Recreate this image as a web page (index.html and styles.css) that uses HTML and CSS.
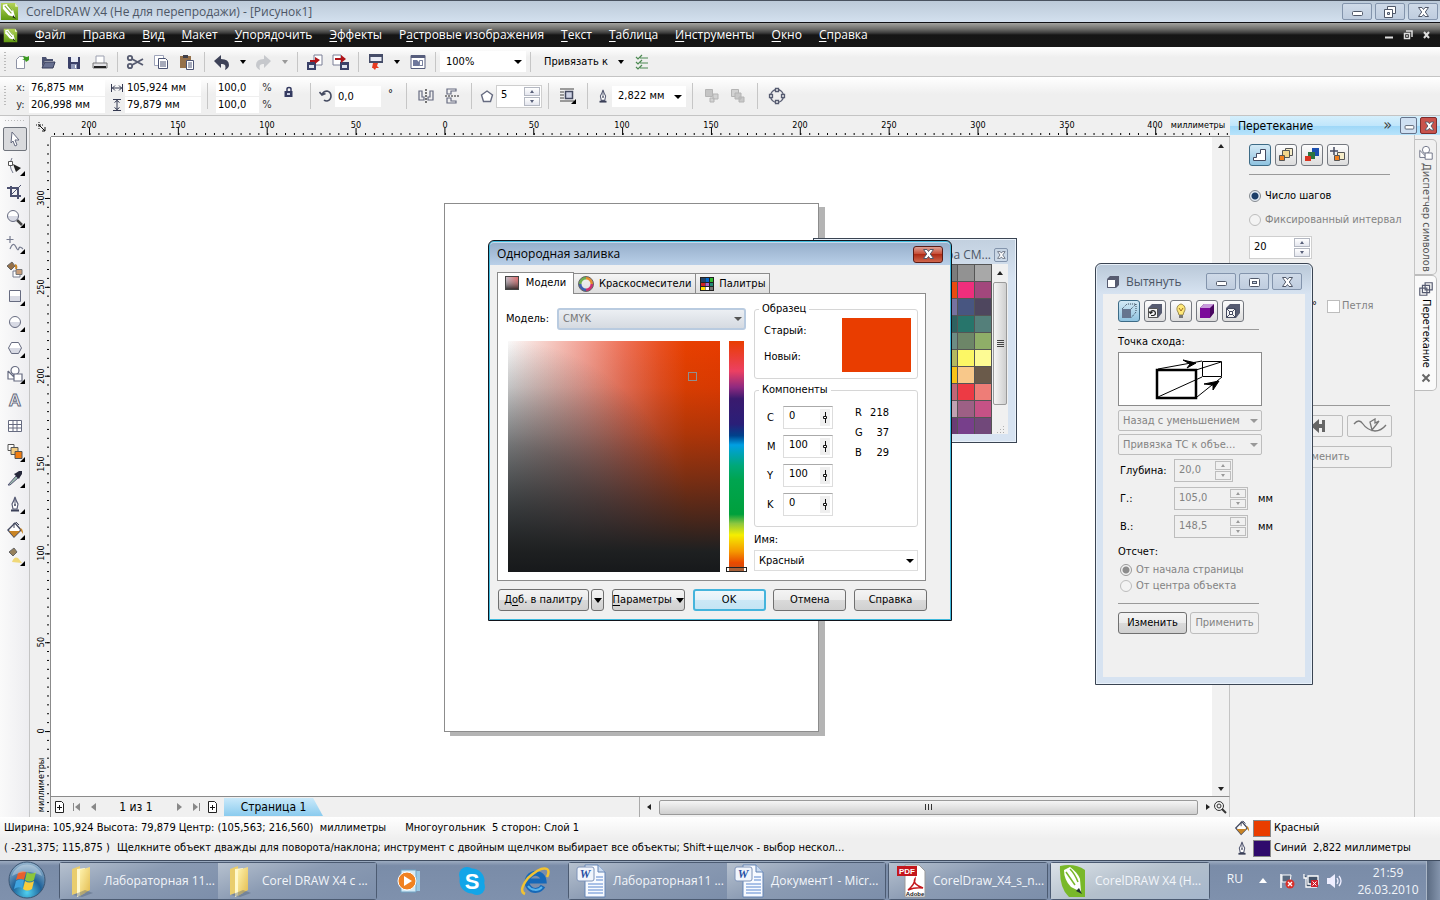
FILE: index.html
```html
<!DOCTYPE html>
<html lang="ru">
<head>
<meta charset="utf-8">
<title>CorelDRAW X4 - [Рисунок1]</title>
<link rel="stylesheet" href="styles.css">
</head>
<body>
<svg class="defs" width="0" height="0" aria-hidden="true">
  <defs>
    <linearGradient id="g-leaf" x1="0" y1="0" x2="0" y2="1"><stop offset="0" stop-color="#b4d458"/><stop offset="1" stop-color="#5f9a10"/></linearGradient>
    <linearGradient id="g-folder" x1="0" y1="0" x2="1" y2="1"><stop offset="0" stop-color="#fff3ae"/><stop offset="1" stop-color="#e2bb4e"/></linearGradient>
    <linearGradient id="g-shape" x1="0" y1="0" x2="0" y2="1"><stop offset=".5" stop-color="#fff"/><stop offset=".5" stop-color="#d8dae4"/></linearGradient>
    <radialGradient id="g-orb" cx=".5" cy=".85" r=".8"><stop offset="0" stop-color="#4fd0f0"/><stop offset=".5" stop-color="#1f6299"/><stop offset="1" stop-color="#8fb0cb"/></radialGradient>
    <symbol id="i-corel" viewBox="0 0 20 20"><path d="M1 1h15l3 4v14H1z" fill="url(#g-leaf)"/><path d="M16 1v4h3z" fill="#eef5d8"/><path d="M3 3l4-1 7 7 2 7-7-2-6-7z" fill="#fff"/><path d="M5 4l7 8M8 3l5 6" stroke="#7fae34" stroke-width="1.200"/><path d="M14 14l3 4-4-2z" fill="#1c2a14"/></symbol>
    <symbol id="i-bucket" viewBox="0 0 18 18"><path d="M2 9l7-7 6 7-7 7z" fill="#fff" stroke="#444a60" stroke-width="1.400"/><path d="M3 10h11l-6 6z" fill="#c98424"/><path d="M8 2v5M10 1l3 3" stroke="#444a60" fill="none"/><path d="M14 7q3 0 3 6l-2-3z" fill="#c98424"/></symbol>
    <symbol id="i-nib" viewBox="0 0 16 18"><path d="M8 2q-1 4-3 7l1 5h4l1-5q-2-3-3-7z" fill="#fff" stroke="#565b74" stroke-width="1.200"/><path d="M8 4v5" stroke="#565b74"/><path d="M4 15.500h8" stroke="#3b4058" stroke-width="2"/><circle cx="8" cy="10" r="1" fill="#3b4058"/></symbol>
    <symbol id="i-more" viewBox="0 0 5 5"><path d="M5 0v5H0z"/></symbol>
    <symbol id="i-shapes" viewBox="0 0 18 18"><circle cx="9" cy="5.500" r="4"/><path d="M2 6v8h6M2 6l6 6M8 9h8v7H8z"/></symbol>
    <symbol id="i-stack" viewBox="0 0 18 18"><path d="M8 2h8v8h-8zM5 5h8v8H5zM2 8h8v8H2z" fill="#f4f4f4" stroke="#555a70" stroke-width="1.300"/></symbol>
    <symbol id="i-folder" viewBox="0 0 30 34"><path d="M5 5l8-3v26l-8 3z" fill="#e9cd6d"/><path d="M10 5l8-1v25l-8 4z" fill="#fff8cc"/><path d="M13 6l10-3v23l-10 6z" fill="url(#g-folder)"/><path d="M6 31l12-5 8 3-11 4z" fill="#45556e" opacity=".35"/></symbol>
    <symbol id="i-word" viewBox="0 0 30 34"><path d="M9 1h13l7 7v25H9z" fill="#f7faff" stroke="#6283b4"/><path d="M22 1v7h7" fill="#c9daf0" stroke="#6283b4"/><path d="M20 13h7M20 16h7M12 20h15M12 23h15M12 26h15M12 29h15" stroke="#5b87cf"/><rect x="1" y="3" width="17" height="14" rx="2" fill="#f1f5fc" stroke="#7d92b8"/><text x="9" y="14" font-family="Liberation Serif,serif" font-size="12" font-weight="bold" font-style="italic" text-anchor="middle" fill="#2851a4">W</text></symbol>
    <symbol id="c-min" viewBox="0 0 16 12"><rect x="3.500" y="5.500" width="10" height="4" rx="1" fill="#fff" stroke="#505869"/></symbol>
    <symbol id="c-max" viewBox="0 0 16 12"><rect x="3.500" y="2.500" width="10" height="8" rx="1" fill="#fff" stroke="#505869"/><rect x="6.500" y="5.500" width="4" height="2" fill="#c5d4e5" stroke="#505869"/></symbol>
    <symbol id="c-x" viewBox="0 0 16 12"><path d="M3.500 1.500H7l1.500 2 1.500-2h3.500L10.300 6l3.200 4.500H10l-1.500-2-1.500 2H3.500L6.700 6z" fill="#fff" stroke="#505869"/></symbol>
    <symbol id="c-rest" viewBox="0 0 16 12"><path d="M5.500 .5h8v7h-8z" fill="#fff" stroke="#505869"/><path d="M2.500 3.500h8v8h-8z" fill="#fff" stroke="#505869"/><path d="M5.500 6.500h2v2h-2z" fill="#c5d4e5" stroke="#505869"/></symbol>
    <symbol id="i-slide" viewBox="0 0 5 11"><path d="M2.500 0v4M2.500 7v4M.5 4.500h3v2h-3z" fill="#fff" stroke="#111"/></symbol>
  </defs>
</svg>

<header class="titlebar">
  <svg class="app-icon" width="19" height="19"><use href="#i-corel"/></svg>
  <h1>CorelDRAW X4 (Не для перепродажи) - [Рисунок1]</h1>
  <div class="win-controls">
    <button aria-label="Свернуть"><svg width="16" height="12"><use href="#c-min"/></svg></button>
    <button aria-label="Восстановить"><svg width="16" height="12"><use href="#c-rest"/></svg></button>
    <button aria-label="Закрыть"><svg width="16" height="12"><use href="#c-x"/></svg></button>
  </div>
</header>

<nav class="menubar">
  <svg class="doc-icon" width="15" height="15"><use href="#i-corel"/></svg>
  <button><u>Ф</u>айл</button><button><u>П</u>равка</button><button><u>В</u>ид</button><button><u>М</u>акет</button><button><u>У</u>порядочить</button><button><u>Э</u>ффекты</button><button>Р<u>а</u>стровые изображения</button><button><u>Т</u>екст</button><button><u>Т</u>аблица</button><button><u>И</u>нструменты</button><button><u>О</u>кно</button><button><u>С</u>правка</button>
  <div class="doc-controls">
    <button aria-label="Свернуть документ"><svg width="10" height="10"><path d="M1 7.500h8" stroke="#ddd" stroke-width="2"/></svg></button>
    <button aria-label="Восстановить документ"><svg width="10" height="10"><path d="M3 1h6v6M1.500 3.500h5v5h-5zM4 5v2" fill="none" stroke="#ddd" stroke-width="1.500"/></svg></button>
    <button aria-label="Закрыть документ"><svg width="10" height="10"><path d="M2 2l5 6M7 2L2 8" stroke="#ddd" stroke-width="2"/></svg></button>
  </div>
</nav>

<div class="toolbar">
  <span class="grip"></span>
  <button aria-label="Создать"><svg width="16" height="16"><path d="M2.500 5.500l3-3h5v12h-8z" fill="#fff" stroke="#8e93a5"/><path d="M8 6l2-1-1-3 4 1 2-1 0 4-3 2-1-2z" fill="#3c9a20"/></svg></button>
  <button aria-label="Открыть"><svg width="16" height="16"><path d="M2 13V3h4l1 2h6v2H5z" fill="#4a5170"/><path d="M5 8h10l-2 6H2z" fill="#687090" stroke="#343a58"/></svg></button>
  <button aria-label="Сохранить"><svg width="16" height="16"><path d="M2 3h12v12H3l-1-1z" fill="#3a4068"/><path d="M5 3h7v5H5z" fill="#e9ecf5"/><path d="M5 10h6v5H5z" fill="#8f98b8"/><path d="M9 11h1v3H9z" fill="#fff"/></svg></button>
  <button aria-label="Печать"><svg width="16" height="16"><path d="M4 2h8v8H4z" fill="#fff" stroke="#9ca0b0"/><path d="M1 9h14v5H1z" fill="#e3e3e6" stroke="#777"/><path d="M2 12h12v2H2z" fill="#222"/></svg></button>
  <span class="sep"></span>
  <button aria-label="Вырезать"><svg width="18" height="16" fill="none" stroke="#565b70" stroke-width="1.800"><path d="M6 5l11 6M6 11l11-6"/><circle cx="4" cy="4" r="2.200"/><circle cx="4" cy="12" r="2.200"/></svg></button>
  <button aria-label="Копировать"><svg width="16" height="16" fill="#fff" stroke="#9ea4ba"><path d="M1.500 1.500h9v10h-9z"/><path d="M5.500 4.500h7l2 2v8h-9z" stroke="#4c5474"/><path d="M7 8h6M7 10h6M7 12h6" stroke="#4c5474"/></svg></button>
  <button aria-label="Вставить"><svg width="16" height="16"><path d="M1 2h11v12H1z" fill="#94704a"/><path d="M4 1h5v3H4z" fill="#40404a"/><path d="M7.500 6.500h7v9h-7z" fill="#fff" stroke="#4c5474"/><path d="M9 9h4M9 11h4M9 13h4" stroke="#4c5474"/></svg></button>
  <span class="sep"></span>
  <button aria-label="Отменить"><svg width="18" height="16"><path d="M1 7l7-6v4q8 0 8 6 0 3-4 5 2-7-4-6v4z" fill="#3e4258"/></svg></button>
  <button class="drop" aria-label="Список отмены"><i class="arr"></i></button>
  <button aria-label="Повторить"><svg width="18" height="16"><path d="M16 7L9 1v4q-8 0-8 6 0 3 4 5-2-7 4-6v4z" fill="#c6c8cc"/></svg></button>
  <button class="drop dim" aria-label="Список повтора"><i class="arr"></i></button>
  <span class="sep"></span>
  <button aria-label="Импорт"><svg width="18" height="18"><path d="M8 2h8v10H8z" fill="#fff" stroke="#7a7f96"/><path d="M1 9h9v8H1z" fill="#3a4068"/><path d="M3 12h5v3H3z" fill="#dfe3ee"/><path d="M4 7h5V4l5 3-5 4V9H4z" fill="#b01318"/></svg></button>
  <button aria-label="Экспорт"><svg width="18" height="18"><path d="M1 2h8v10H1z" fill="#fff" stroke="#7a7f96"/><path d="M8 9h9v8H8z" fill="#3a4068"/><path d="M10 12h5v3h-5z" fill="#dfe3ee"/><path d="M3 5h6V2l5 4-5 4V7H3z" fill="#b01318"/></svg></button>
  <span class="sep"></span>
  <button aria-label="Запуск приложений"><svg width="16" height="18"><path d="M1 1h14v9H1z" fill="#454c68"/><path d="M2.500 4h11v4h-11z" fill="#e9ecf5"/><path d="M5 10h5l-1 3 2 2-3 0-1 2-2-2-1 0z" fill="#e63a20"/></svg></button>
  <button class="drop" aria-label="Список приложений"><i class="arr"></i></button>
  <button aria-label="Экран приветствия"><svg width="16" height="16"><path d="M1 1.500h14v13H1z" fill="#fff" stroke="#565d7c"/><path d="M1 1h14v3H1z" fill="#565d7c"/><path d="M3 6h4l2 2 4-2v6H3z" fill="#6f789c"/><path d="M9.500 6.500h3v5h-3z" fill="#fff" stroke="#7a82a0"/></svg></button>
  <span class="sep"></span>
  <span class="pick zoom"><select aria-label="Масштаб"><option>100%</option></select></span>
  <span class="sep"></span>
  <button class="txt snap">Привязать к</button>
  <button class="drop" aria-label="Параметры привязки"><i class="arr"></i></button>
  <button aria-label="Параметры"><svg width="16" height="16" fill="none" stroke="#4d8a52" stroke-width="1.200"><path d="M6 4h8M6 9h8M6 14h8M2 3l2 2 4-4M2 8l2 2 4-4M2 13l2 2 4-4"/></svg></button>
</div>

<div class="toolbar props">
  <span class="grip"></span>
  <div class="pair">
    <label for="px">x:</label><input id="px" value="76,875 мм">
    <label for="py">y:</label><input id="py" value="206,998 мм">
  </div>
  <div class="pair">
    <label for="pw"><svg width="14" height="12" fill="none" stroke="#333850"><path d="M1.500 2v8M12.500 2v8M2 6h10M5 3.500L2.500 6 5 8.500M9 3.500L11.500 6 9 8.500"/></svg></label><input id="pw" aria-label="Ширина" value="105,924 мм">
    <label for="ph"><svg width="14" height="12" fill="none" stroke="#333850"><path d="M3 .5h8M3 11.500h8M7 1v10M4.500 3.500L7 1.500l2.500 2M4.500 8.500L7 10.500l2.500-2"/></svg></label><input id="ph" aria-label="Высота" value="79,879 мм">
  </div>
  <span class="sep"></span>
  <div class="pair scale">
    <input id="sx" value="100,0"><label for="sx">%</label>
    <input id="sy" value="100,0"><label for="sy">%</label>
  </div>
  <button class="lock" aria-label="Пропорции"><svg width="12" height="14"><path d="M1.500 6h8v6h-8z" fill="#343a60"/><path d="M4 6V4q0-1.500 2-1.500T8 4v2" fill="none" stroke="#343a60" stroke-width="1.500"/><path d="M4 8h3v2H4z" fill="#c9cfe4"/></svg></button>
  <span class="sep"></span>
  <label for="rot" class="ico"><svg width="14" height="14" fill="none" stroke="#444a60" stroke-width="1.600"><path d="M3 5q2-3 5-3 4 1 4 5 0 4-4 5-2 0-3-1M.5 3l2.500 3 3.500-1.500"/></svg></label>
  <input id="rot" class="w46" aria-label="Угол поворота" value="0,0"><span class="deg">°</span>
  <span class="sep"></span>
  <button aria-label="Отразить по горизонтали"><svg width="18" height="16" fill="none" stroke="#666b80" stroke-width="1.200"><path d="M2 3v9h5V9H5V3zM16 3v9h-5V9h2V3z"/><path d="M9 1v14" stroke-dasharray="2 1" stroke="#222"/></svg></button>
  <button aria-label="Отразить по вертикали"><svg width="18" height="16" fill="none" stroke="#666b80" stroke-width="1.200"><path d="M4 1h9v2H8v3H4zM4 15h9v-2H8v-3H4z"/><path d="M2 8h14" stroke-dasharray="2 1" stroke="#222"/></svg></button>
  <span class="sep"></span>
  <label for="sides" class="ico"><svg width="14" height="14"><path d="M7 2l5.500 4-2 6.500h-7l-2-6.500z" fill="#fff" stroke="#666b80" stroke-width="1.400"/></svg></label>
  <span class="spin w46"><input id="sides" aria-label="Число сторон" value="5"><span class="ud"><button aria-label="Больше"></button><button aria-label="Меньше"></button></span></span>
  <span class="sep"></span>
  <button aria-label="Обтекание"><svg width="18" height="18"><path d="M1 2h14M1 5h4M1 8h4M1 11h4M1 14h14" stroke="#444"/><rect x="6.500" y="4.500" width="7" height="7" fill="#cfd3e4" stroke="#444a60" stroke-width="1.500"/><path d="M17 12v5h-5z"/></svg></button>
  <span class="sep"></span>
  <label for="ow" class="ico"><svg width="14" height="16"><use href="#i-nib"/></svg></label>
  <span class="pick outline"><select id="ow" aria-label="Толщина абриса"><option>2,822 мм</option></select></span>
  <span class="sep"></span>
  <button aria-label="На передний план"><svg width="16" height="16" fill="#c4c4c4" stroke="#b4b4b4"><path d="M1.500 1.500h7v7h-7z"/><path d="M9 6h5v5H9zM6 10h4v4H6z" fill="#d2d2d2"/></svg></button>
  <button aria-label="На задний план"><svg width="16" height="16" fill="#d2d2d2" stroke="#b4b4b4"><path d="M1.500 1.500h7v7h-7z"/><path d="M5 5h6v6H5zM9 9h5v5H9z" fill="#c8c8c8"/></svg></button>
  <span class="sep"></span>
  <button aria-label="Преобразовать в кривые"><svg width="18" height="18" fill="#fff" stroke="#565b70" stroke-width="1.300"><circle cx="9" cy="9" r="6.500" fill="none"/><path d="M7.500 1.500h3v3h-3zM7.500 13.500h3v3h-3zM1.500 7.500h3v3h-3zM13.500 7.500h3v3h-3z"/></svg></button>
</div>

<main class="middle">
  <aside class="toolbox">
    <span class="grip flat"></span>
    <button class="on" aria-label="Указатель"><svg width="18" height="18"><path d="M6 2l7 8H9l2 5-2 1-2-5-2 2z" fill="#fff" stroke="#666b80"/></svg></button>
    <button aria-label="Форма"><svg width="18" height="18"><path d="M6 1q-4 7 1 15" fill="none" stroke="#777c90"/><path d="M2.500 4.500h4v4h-4z" fill="#fff" stroke="#555"/><path d="M7 7l8 4-5 4z" fill="#222"/></svg><svg class="more"><use href="#i-more"/></svg></button>
    <button aria-label="Обрезка"><svg width="18" height="18" fill="none" stroke="#4c5170" stroke-width="2"><path d="M5 3v10h10M1 5h11v11"/><path d="M15 2L5 12" stroke-width="1"/></svg><svg class="more"><use href="#i-more"/></svg></button>
    <button aria-label="Масштаб"><svg width="18" height="18"><path d="M11 11l5 5" stroke="#444" stroke-width="2.500"/><circle cx="7" cy="7" r="5.500" fill="url(#g-shape)" stroke="#666b80"/></svg><svg class="more"><use href="#i-more"/></svg></button>
    <button aria-label="Свободная форма"><svg width="18" height="18" fill="none" stroke="#777c90" stroke-width="1.200"><path d="M4 1v7M.5 4.500h7M4 14q3-8 6-2 2 5 3 1 1-2 4 1"/></svg><svg class="more"><use href="#i-more"/></svg></button>
    <button aria-label="Интеллектуальная заливка"><svg width="18" height="18"><path d="M1 5l5-4 3 4-4 4z" fill="#96714a" stroke="#666"/><path d="M9 4q2 1 1 4" stroke="#c98424" fill="none" stroke-width="2"/><path d="M7 10h7v6H7z" fill="#fff" stroke="#777c90"/><path d="M10 8.500h6v5h-6z" fill="#c79c78" stroke="#777"/></svg><svg class="more"><use href="#i-more"/></svg></button>
    <button aria-label="Прямоугольник"><svg width="18" height="18"><path d="M3.500 3.500h11v11h-11z" fill="url(#g-shape)" stroke="#666b80"/></svg><svg class="more"><use href="#i-more"/></svg></button>
    <button aria-label="Эллипс"><svg width="18" height="18"><circle cx="9" cy="9" r="5.500" fill="url(#g-shape)" stroke="#666b80"/></svg><svg class="more"><use href="#i-more"/></svg></button>
    <button aria-label="Многоугольник"><svg width="18" height="18"><path d="M5.500 3.500h7l3 5.500-3 5.500h-7L2.500 9z" fill="url(#g-shape)" stroke="#666b80"/></svg><svg class="more"><use href="#i-more"/></svg></button>
    <button aria-label="Основные фигуры"><svg width="18" height="18" fill="#fff" stroke="#666b80" stroke-width="1.200"><use href="#i-shapes"/></svg><svg class="more"><use href="#i-more"/></svg></button>
    <button aria-label="Текст"><svg width="18" height="18"><text x="9" y="15" text-anchor="middle" font-family="Liberation Sans,sans-serif" font-weight="bold" font-size="17" fill="#fff" stroke="#666b80">A</text></svg></button>
    <button aria-label="Таблица"><svg width="18" height="18"><path d="M2.500 3.500h13v11h-13zM2.500 7.500h13M2.500 11h13M7 3.500v11M11 3.500v11" fill="#fff" stroke="#666b80"/></svg></button>
    <button aria-label="Перетекание"><svg width="18" height="18" stroke="#555"><path d="M2 1.500h6v6H2z" fill="#fff"/><path d="M5 4.500h7v7H5z" fill="#f2cd84"/><path d="M9 8.500h7v7H9z" fill="#f07c10"/></svg><svg class="more"><use href="#i-more"/></svg></button>
    <button aria-label="Пипетка"><svg width="18" height="18"><path d="M2 16l8-9 2 2-8 7z" fill="#9fc0ae" stroke="#557"/><path d="M8 5l5 5 1-2 2-3 0-3-3 0-3 2z" fill="#26283a"/></svg><svg class="more"><use href="#i-more"/></svg></button>
    <button aria-label="Абрис"><svg width="16" height="18"><use href="#i-nib"/></svg><svg class="more"><use href="#i-more"/></svg></button>
    <button aria-label="Заливка"><svg width="18" height="18"><use href="#i-bucket"/></svg><svg class="more"><use href="#i-more"/></svg></button>
    <button aria-label="Интерактивная заливка"><svg width="18" height="18"><path d="M3 5l5-4 3 4-4 4z" fill="#96805c" stroke="#666"/><path d="M6 15q2-6 6-4l4 5z" fill="#f0d878"/></svg><svg class="more"><use href="#i-more"/></svg></button>
  </aside>

  <section class="workspace">
    <div class="corner"><svg width="12" height="12" stroke="#111" fill="none"><path d="M1 4h8M4 1v8" stroke-dasharray="1 1"/><path d="M4 4l6 6M10 6v4H7"/></svg></div>
    <svg class="ruler-h" height="21">
      <defs>
        <pattern id="mh" x="3" width="8.885" height="21" patternUnits="userSpaceOnUse"><path d="M0 17h1v2H0z"/></pattern>
        <pattern id="jh" x="38" width="88.85" height="21" patternUnits="userSpaceOnUse"><path d="M0 12h1v7H0z"/></pattern>
      </defs>
      <rect width="100%" height="21" fill="url(#mh)"/><rect width="100%" height="21" fill="url(#jh)"/>
      <g><text x="38" y="12">200</text><text x="127" y="12">150</text><text x="216" y="12">100</text><text x="305" y="12">50</text><text x="394" y="12">0</text><text x="483" y="12">50</text><text x="571" y="12">100</text><text x="660" y="12">150</text><text x="749" y="12">200</text><text x="838" y="12">250</text><text x="927" y="12">300</text><text x="1016" y="12">350</text><text x="1104" y="12">400</text><text x="1147" y="12">миллиметры</text></g>
    </svg>
    <svg class="ruler-v" width="21">
      <defs>
        <pattern id="mv" y="7.600" width="21" height="8.885" patternUnits="userSpaceOnUse"><path d="M17 0h2v1h-2z"/></pattern>
        <pattern id="jv" y="61" width="21" height="88.85" patternUnits="userSpaceOnUse"><path d="M15 0h5v1h-5z"/></pattern>
      </defs>
      <rect width="21" height="100%" fill="url(#mv)"/><rect width="21" height="100%" fill="url(#jv)"/>
      <g><text transform="translate(14 61) rotate(-90)">300</text><text transform="translate(14 150) rotate(-90)">250</text><text transform="translate(14 239) rotate(-90)">200</text><text transform="translate(14 327) rotate(-90)">150</text><text transform="translate(14 416) rotate(-90)">100</text><text transform="translate(14 505) rotate(-90)">50</text><text transform="translate(14 594) rotate(-90)">0</text><text transform="translate(14 648) rotate(-90)">миллиметры</text></g>
    </svg>
    <div class="canvas"><div class="sheet"></div></div>
    <div class="vscroll"><i class="tri t-up"></i><i class="tri t-down"></i></div>
    <footer class="pagebar">
      <button aria-label="Добавить страницу"><svg width="12" height="14"><path d="M1.500 1.500h6l2 2v9h-8z" fill="#fff" stroke="#222"/><path d="M3 7.500h5M5.500 5v5" stroke="#111"/></svg></button>
      <button aria-label="Первая"><svg width="12" height="12" fill="#888"><path d="M2 2h1v8H2zM9 2v8L4 6z"/></svg></button>
      <button aria-label="Назад"><svg width="12" height="12" fill="#888"><path d="M8 2v8L3 6z"/></svg></button>
      <span class="count">1 из 1</span>
      <button aria-label="Вперед"><svg width="12" height="12" fill="#888"><path d="M4 2v8l5-4z"/></svg></button>
      <button aria-label="Последняя"><svg width="12" height="12" fill="#888"><path d="M9 2h1v8H9zM3 2v8l5-4z"/></svg></button>
      <button aria-label="Добавить страницу в конец"><svg width="12" height="14"><path d="M1.500 1.500h6l2 2v9h-8z" fill="#fff" stroke="#222"/><path d="M3 7.500h5M5.500 5v5" stroke="#111"/></svg></button>
      <button class="page-tab">Страница 1</button>
      <div class="hscroll"><i class="tri t-left"></i><span class="thumb"><svg width="8" height="6"><path d="M.5 0v6M3.500 0v6M6.500 0v6" stroke="#333"/></svg></span><i class="tri t-right"></i></div>
      <button aria-label="Навигатор"><svg width="15" height="15" fill="none" stroke="#333"><circle cx="6" cy="6" r="4.500"/><circle cx="6" cy="6" r="2"/><path d="M9 9l4 4" stroke-width="2"/></svg></button>
    </footer>
  </section>

  <aside class="docker">
    <header><h2>Перетекание</h2><span class="chev">»</span>
      <button aria-label="Свернуть окно"><svg width="14" height="12"><use href="#c-min"/></svg></button>
      <button class="red" aria-label="Закрыть окно"><svg width="14" height="12"><use href="#c-x"/></svg></button></header>
    <div class="docker-row">
      <div class="docker-body">
        <div class="modes">
          <button class="on" aria-label="Шаги"><svg width="18" height="18"><path d="M2.500 14.500v-3h3v-4h4v-4h5v11z" fill="#fff" stroke="#444a60"/></svg></button>
          <button aria-label="Ускорение"><svg width="18" height="18" stroke="#555"><path d="M8.500 2.500h7v7h-7z" fill="#f6edc9"/><path d="M5.500 4.500h7v7h-7z" fill="#f2d68c"/><path d="M2.500 9.500h5v5h-5z" fill="#f08020"/></svg></button>
          <button aria-label="Цвет"><svg width="18" height="18"><path d="M9 2h7v8H9z" fill="#1b4fb0"/><path d="M5 6h7v7H5z" fill="#2c7440"/><path d="M2 10h6v5H2z" fill="#d83420"/></svg></button>
          <button aria-label="Прочее"><svg width="18" height="18"><path d="M5 1v8M1 5h8" stroke="#444a60" stroke-width="1.500"/><path d="M8.500 6.500h7v7h-7z" fill="#f6edc9" stroke="#555"/><path d="M5.500 9.500h5v5h-5z" fill="#f08020" stroke="#555"/></svg></button>
        </div>
        <hr>
        <label class="radio"><input type="radio" name="step" checked>Число шагов</label>
        <label class="radio off"><input type="radio" name="step" disabled>Фиксированный интервал</label>
        <span class="spin steps"><input aria-label="Число шагов" value="20"><span class="ud"><button aria-label="Больше"></button><button aria-label="Меньше"></button></span></span>
        <div class="loop"><span>°</span><label class="off"><input type="checkbox" disabled>Петля</label></div>
        <hr>
        <div class="pathbtns"><button disabled aria-label="Начало"></button><button disabled aria-label="Конец"><svg width="20" height="16"><path d="M0 8l8-7v5h3V2h3v12h-3v-4H8v5z" fill="#666"/></svg></button><button disabled aria-label="Путь"><svg width="36" height="16" fill="none" stroke="#777" stroke-width="1.300"><path d="M2 6q5-6 9 0t12 7q6 0 11-6M20 12l-2-8 5-3v4l4-2-3 4z"/></svg></button></div>
        <button class="apply" disabled>Применить</button>
      </div>
      <div class="vtabs">
        <button><svg width="16" height="16" fill="#fff" stroke="#666b80"><use href="#i-shapes"/></svg><span>Диспетчер символов</span></button>
        <button class="on"><svg width="16" height="16"><use href="#i-stack"/></svg><span>Перетекание</span><svg class="x" width="10" height="10"><path d="M1.500 1.500l7 7M8.500 1.500l-7 7" stroke="#666" stroke-width="2"/></svg></button>
      </div>
    </div>
  </aside>

  <section class="win palette">
    <header><h2>Палитра CM...</h2><button aria-label="Закрыть палитру"><svg width="12" height="10" viewBox="0 0 16 12"><use href="#c-x"/></svg></button></header>
    <div class="palette-row">
      <div class="swatches">
        <i style="background:#7c7c7c"></i><i style="background:#929292"></i><i style="background:#a8a8a8"></i>
        <i style="background:#e94b10"></i><i style="background:#ef2e7c"></i><i style="background:#a2477c"></i>
        <i style="background:#77729f"></i><i style="background:#485681"></i><i style="background:#4e465e"></i>
        <i style="background:#2f6160"></i><i style="background:#27756b"></i><i style="background:#547f7a"></i>
        <i style="background:#6d8c84"></i><i style="background:#6d8668"></i><i style="background:#8fae68"></i>
        <i style="background:#b4b85e"></i><i style="background:#fcf765"></i><i style="background:#fdfb94"></i>
        <i style="background:#f7c318"></i><i style="background:#f8c88a"></i><i style="background:#6a5a4a"></i>
        <i style="background:#c06676"></i><i style="background:#ed3a44"></i><i style="background:#ee7d77"></i>
        <i style="background:#c0a2b2"></i><i style="background:#9d6085"></i><i style="background:#c65286"></i>
        <i style="background:#6a3c74"></i><i style="background:#773f8b"></i><i style="background:#71487a"></i>
      </div>
      <div class="pscroll"><i class="tri t-up"></i><span class="thumb"><svg width="7" height="8"><path d="M0 .5h7M0 2.500h7M0 4.500h7M0 6.500h7" stroke="#444"/></svg></span><span class="size"></span></div>
    </div>
  </section>

  <section class="win dialog" role="dialog" aria-label="Однородная заливка">
    <header><h2>Однородная заливка</h2><button class="close" aria-label="Закрыть"><svg width="16" height="12"><use href="#c-x"/></svg></button></header>
    <div class="tabs">
      <button class="on"><svg width="14" height="14"><defs><linearGradient id="g-m"><stop offset="0" stop-color="#aab"/><stop offset="1" stop-color="#d22"/></linearGradient><linearGradient id="g-k" x1="0" y1="0" x2="0" y2="1"><stop offset="0" stop-color="#fff" stop-opacity=".3"/><stop offset="1" stop-color="#222" stop-opacity=".9"/></linearGradient></defs><rect width="14" height="14" fill="url(#g-m)"/><rect x=".5" y=".5" width="13" height="13" fill="url(#g-k)" stroke="#444"/></svg>Модели</button>
      <button><svg width="16" height="16" fill="none" stroke-width="3"><path d="M8 2a6 6 0 0 1 6 6" stroke="#e58c30"/><path d="M14 8a6 6 0 0 1-6 6" stroke="#d03070"/><path d="M8 14a6 6 0 0 1-6-6" stroke="#4060b0"/><path d="M2 8a6 6 0 0 1 6-6" stroke="#70b050"/><circle cx="8" cy="8" r="7.500" stroke="#666" stroke-width="1"/></svg>Краскосмесители</button>
      <button><svg width="14" height="14"><path d="M0 0h14v14H0z" fill="#222"/><path d="M1 1h4v4H1z" fill="#246"/><path d="M5.500 1h3.500v4H5.500z" fill="#06c"/><path d="M10 1h3v4h-3z" fill="#3b3"/><path d="M1 6h4v3H1z" fill="#c22"/><path d="M5.500 6H9v3H5.500z" fill="#a6c"/><path d="M10 6h3v3h-3z" fill="#287"/><path d="M1 10h4v3H1z" fill="#fd0"/><path d="M5.500 10H9v3H5.500z" fill="#fff"/><path d="M10 10h3v3h-3z" fill="#777"/></svg>Палитры</button>
    </div>
    <div class="panel">
      <div class="mixer">
        <div class="model"><label for="model">Модель:</label><span class="pick grey"><select id="model" disabled><option>CMYK</option></select></span></div>
        <div class="fields"><div class="field"><i class="cursor"></i></div><div class="hue"><i class="marker"></i></div></div>
      </div>
      <div class="details">
        <fieldset class="sample"><legend>Образец</legend><div><p>Старый:</p><p>Новый:</p></div><span class="chip"></span></fieldset>
        <fieldset class="comps"><legend>Компоненты</legend>
          <div class="cmyk">
            <label for="cc">C</label><span class="num"><input id="cc" value="0"><button aria-label="Ползунок C"><svg width="5" height="11"><use href="#i-slide"/></svg></button></span>
            <label for="cm">M</label><span class="num"><input id="cm" value="100"><button aria-label="Ползунок M"><svg width="5" height="11"><use href="#i-slide"/></svg></button></span>
            <label for="cy">Y</label><span class="num"><input id="cy" value="100"><button aria-label="Ползунок Y"><svg width="5" height="11"><use href="#i-slide"/></svg></button></span>
            <label for="ck">K</label><span class="num"><input id="ck" value="0"><button aria-label="Ползунок K"><svg width="5" height="11"><use href="#i-slide"/></svg></button></span>
          </div>
          <dl><dt>R</dt><dd>218</dd><dt>G</dt><dd>37</dd><dt>B</dt><dd>29</dd></dl>
        </fieldset>
        <label class="name" for="cname">Имя:</label>
        <span class="pick named"><select id="cname"><option>Красный</option></select></span>
      </div>
    </div>
    <div class="actions">
      <div class="split"><button class="add"><span>Д<u>о</u>б. в палитру</span></button><button class="dd" aria-label="Выбрать палитру"><i class="arr big"></i></button></div>
      <button class="tight"><span><u>П</u>араметры</span><i class="arr big"></i></button><button class="default">OK</button><button>Отмена</button><button>Справка</button>
    </div>
  </section>

  <section class="win extrude">
    <header><svg width="14" height="14"><path d="M4 1h9v9l-3 3H1V4z" fill="#565b70"/><path d="M1.500 4.500h8v8h-8z" fill="#fff" stroke="#565b70"/></svg><h2>Вытянуть</h2>
      <div class="win-controls">
        <button aria-label="Свернуть"><svg width="16" height="12"><use href="#c-min"/></svg></button><button aria-label="Развернуть"><svg width="16" height="12"><use href="#c-max"/></svg></button><button aria-label="Закрыть"><svg width="16" height="12"><use href="#c-x"/></svg></button>
      </div></header>
    <div class="ex-body">
      <div class="modes">
        <button class="on" aria-label="Камера"><svg width="18" height="18"><path d="M2 7h9v9H2z" fill="#65758f"/><path d="M2 7l5-5h9l-5 5M16 2v8l-5 6" fill="none" stroke="#345" stroke-dasharray="1 1"/></svg></button>
        <button aria-label="Поворот"><svg width="18" height="18"><path d="M2 6l4-4h10v9l-4 5H2z" fill="#565b70"/><path d="M2.500 6.500h9v9h-9z" fill="#f4f4f4" stroke="#555"/><path d="M5 13.500h2.500a2.500 2.500 0 1 0-3-3M3 9.500l1.500 2 2-1.500" fill="none" stroke="#222" stroke-width="1.200"/></svg></button>
        <button aria-label="Свет"><svg width="18" height="18"><path d="M9 2a5 5 0 0 1 3 8l-1 3H7l-1-3a5 5 0 0 1 3-8z" fill="#ffe878" stroke="#9a8a50"/><path d="M7 13h4v3H7z" fill="#777"/><path d="M7 6l2 3 2-3" fill="none" stroke="#a07020"/></svg></button>
        <button aria-label="Цвет"><svg width="18" height="18"><path d="M2 6l4-4h10v9l-4 5H2z" fill="#4a0860"/><path d="M6 2h10l-4 4H2z" fill="#c89adc"/><path d="M2 6h10v10H2z" fill="#7b0a9a"/></svg></button>
        <button aria-label="Скос"><svg width="18" height="18"><path d="M2 6l4-4h10v9l-4 5H2z" fill="#565b70"/><path d="M2.500 6.500h9v9h-9zM3 7l8 8M11 7l-8 8" fill="#f4f4f4" stroke="#444a60"/><path d="M5.500 9.500h3v3h-3z" fill="#fff" stroke="#444a60"/></svg></button>
      </div>
      <hr>
      <p class="cap">Точка схода:</p>
      <div class="preview"><svg width="70" height="44" fill="none" stroke="#000"><path d="M2 13h39v28H2z" stroke-width="2.500"/><path d="M47.500 4.500h19v15h-19z"/><path d="M3 12L47 4M3 40l44-20M41 13L66 5M42 40l25-20"/><path d="M28 3l13 3-9 5 3-4zM49 27l15-3-6 9 0-5z" fill="#000"/></svg></div>
      <span class="pick off"><select aria-label="Тип вытягивания" disabled><option>Назад с уменьшением</option></select></span>
      <span class="pick off"><select aria-label="Привязка точки схода" disabled><option>Привязка ТС к объе...</option></select></span>
      <div class="dims">
        <label for="dep">Глубина:</label><span class="spin short off"><input id="dep" value="20,0" disabled><span class="ud"><button disabled aria-label="Больше"></button><button disabled aria-label="Меньше"></button></span></span><span></span>
        <label for="hh">Г.:</label><span class="spin off"><input id="hh" value="105,0" disabled><span class="ud"><button disabled aria-label="Больше"></button><button disabled aria-label="Меньше"></button></span></span><span class="mm">мм</span>
        <label for="vv">В.:</label><span class="spin off"><input id="vv" value="148,5" disabled><span class="ud"><button disabled aria-label="Больше"></button><button disabled aria-label="Меньше"></button></span></span><span class="mm">мм</span>
      </div>
      <p class="cap">Отсчет:</p>
      <label class="radio off"><input type="radio" name="org" checked disabled>От начала страницы</label>
      <label class="radio off"><input type="radio" name="org" disabled>От центра объекта</label>
      <hr>
      <div class="ex-actions"><button>Изменить</button><button disabled>Применить</button></div>
    </div>
  </section>
</main>

<div class="status">
  <div class="info"><p><span>Ширина: 105,924</span> <span>Высота: 79,879</span> <span>Центр: (105,563; 216,560)&nbsp; миллиметры</span><span class="obj">Многоугольник&nbsp; 5 сторон: Слой 1</span></p>
  <p><span>( -231,375; 115,875 )</span><span class="hint">Щелкните объект дважды для поворота/наклона; инструмент с двойным щелчком выбирает все объекты; Shift+щелчок - выбор нескол...</span></p></div>
  <div class="colors">
    <p><svg width="16" height="16"><use href="#i-bucket"/></svg><i class="sw fill"></i>Красный</p>
    <p><svg width="16" height="16"><use href="#i-nib"/></svg><i class="sw line"></i>Синий&nbsp; 2,822 миллиметры</p>
  </div>
</div>

<footer class="taskbar">
  <button class="start" aria-label="Пуск"><svg width="38" height="38"><circle cx="19" cy="19" r="18" fill="url(#g-orb)" stroke="#3c5673"/><path d="M10 12q4-3 8-1l-2 8q-4-2-8 0z" fill="#e8602c"/><path d="M19 11q4 3 9 0l-2 8q-4 3-9 0z" fill="#8cc63c"/><path d="M8 20q4-3 8-1l-2 8q-4-2-8 1z" fill="#3fa4e0"/><path d="M17 20q4 3 9 0l-2 8q-5 3-9 0z" fill="#f8cc3c"/><path d="M4 15a15.500 15.500 0 0 1 30 0q-15-8-30 0z" fill="#fff" opacity=".3"/></svg></button>
  <div class="group"><button class="task"><svg width="30" height="34"><use href="#i-folder"/></svg>Лабораторная 11...</button><button class="task"><svg width="30" height="34"><use href="#i-folder"/></svg>Corel DRAW X4 с ...</button></div>
  <div class="pins">
    <button aria-label="Проигрыватель"><svg width="28" height="28"><path d="M10 4h15v20H10z" fill="#9bc8e4"/><path d="M6 3h15v22H6z" fill="#d3eaf6" stroke="#6fa3c4"/><circle cx="12" cy="14" r="9" fill="#f08222" stroke="#fff"/><path d="M9 9v10l8-5z" fill="#fff"/></svg></button>
    <button aria-label="Skype"><svg width="30" height="30"><circle cx="15" cy="15" r="12.500" fill="#12a5e8"/><circle cx="10" cy="9" r="8" fill="#12a5e8"/><circle cx="20" cy="21" r="8" fill="#12a5e8"/><text x="15" y="23" text-anchor="middle" font-family="Liberation Sans,sans-serif" font-weight="bold" font-size="22" fill="#fff">S</text></svg></button>
    <button aria-label="Internet Explorer"><svg width="32" height="32" fill="none"><path d="M24 21a8.500 8.500 0 1 1 1-5H9" stroke="#1668b8" stroke-width="5"/><path d="M23 22a9 9 0 0 1-14-1" stroke="#57b4ee" stroke-width="2"/><path d="M6 29Q-1 26 9 13 22 1 28 4q3 2 0 8" stroke="#f1c232" stroke-width="2.500"/></svg></button>
  </div>
  <div class="group"><button class="task"><svg width="30" height="34"><use href="#i-word"/></svg>Лабораторная11 ...</button><button class="task"><svg width="30" height="34"><use href="#i-word"/></svg>Документ1 - Micr...</button></div>
  <div class="group"><button class="task"><svg width="30" height="34"><path d="M9 1h14l6 6v26H9z" fill="#fff" stroke="#999"/><path d="M1 2h20v10H1z" fill="#c4161c"/><text x="11" y="10" text-anchor="middle" font-family="Liberation Sans,sans-serif" font-weight="bold" font-size="8" fill="#fff">PDF</text><path d="M12 26q7-6 7-11-3 5 8 9-8-1-15 2z" fill="none" stroke="#c4161c" stroke-width="1.500"/><text x="19" y="32" text-anchor="middle" font-family="Liberation Sans,sans-serif" font-weight="bold" font-size="6" fill="#222">Adobe</text></svg>CorelDraw_X4_s_n...</button></div>
  <div class="group"><button class="task active"><svg width="30" height="34"><path d="M2 2q15-3 25 4v27H11Q1 24 2 2z" fill="#79b82a"/><path d="M6 6l6-3q8 6 10 12l1 13-10-5Q6 16 6 6z" fill="#fff"/><path d="M8 8l9 13M12 5q5 5 8 13" fill="none" stroke="#79b82a" stroke-width="1.500"/><path d="M21 24l3 6-6-3z" fill="#233"/></svg>CorelDRAW X4 (H...</button></div>
  <div class="tray">
    <span class="lang">RU</span><i class="tri t-up light"></i>
    <svg width="18" height="18"><path d="M3 2v14" stroke="#fff" stroke-width="1.500"/><path d="M4 3h9l-1 7H4z" fill="#5a6a80" stroke="#fff"/><circle cx="12" cy="12" r="4.500" fill="#d8302a"/><path d="M10 10l4 4M14 10l-4 4" stroke="#fff" stroke-width="1.300"/></svg>
    <svg width="18" height="18"><path d="M6 4h10v8H6zM2 2v4h3M4 6v9h5M9 15h6" fill="#44546a" stroke="#fff" stroke-width="1.300"/><path d="M9 8h7v7H9z" fill="#d01f2c"/><path d="M10.500 9.500l4 4M14.500 9.500l-4 4" stroke="#fff"/></svg>
    <svg width="18" height="18"><path d="M1 6h3l5-4v14l-5-4H1z" fill="#eef"/><path d="M11 6q2 3 0 6M13 4q4 5 0 10" fill="none" stroke="#eef" stroke-width="1.300"/></svg>
    <div class="clock"><time>21:59</time><time>26.03.2010</time></div>
  </div>
  <button class="show" aria-label="Показать рабочий стол"></button>
</footer>
</body>
</html>
```
FILE: styles.css
```css
* { box-sizing: border-box; }
body { margin: 0; height: 100vh; min-height: 760px; display: flex; flex-direction: column; overflow: hidden; background: #f0f0f0; color: #000; font: 11px/14px "DejaVu Sans Condensed", "DejaVu Sans", sans-serif; }
.defs { position: absolute; }
button, input, select, fieldset, legend, h1, h2, p, dl, dd, hr { margin: 0; padding: 0; font: inherit; color: inherit; }
button { border: 0; background: none; display: flex; align-items: center; justify-content: center; white-space: nowrap; }
input, select { border: 0; border-radius: 0; background: #fff; min-width: 0; outline: 0; }
select { appearance: none; opacity: 1; }
svg { display: block; flex: none; }
hr { border: 0; border-top: 1px solid #9a9a9a; }

.titlebar { flex: none; height: 23px; display: flex; align-items: center; gap: 7px; padding-right: 2px; border-top: 1px solid #49525f; border-bottom: 1px solid #101014; background: linear-gradient(#bccad9, #d3e0ee); }
.titlebar h1 { flex: 1; font: 12px/16px "Open Sans", "Noto Sans", sans-serif; color: #4c5666; }
.win-controls { display: flex; gap: 3px; }
.win-controls button { width: 30px; height: 17px; border: 1px solid #8394ac; border-radius: 2px; background: linear-gradient(#cfdae8, #bfcddf); }

.menubar { flex: none; height: 24px; display: flex; align-items: center; gap: 17px; padding: 0 8px 0 3px; background: linear-gradient(#a3a39f 0, #6e6e6b 25%, #3a3a3a 42%, #151515 50%, #171717); color: #fff; font: 12px/16px "Open Sans", "Noto Sans", sans-serif; }
.doc-controls { margin-left: auto; display: flex; gap: 9px; }
u { text-underline-offset: 2px; }

.toolbar { flex: none; height: 30px; display: flex; align-items: center; padding-left: 4px; border-bottom: 1px solid #c4c4c4; background: linear-gradient(#fff, #efefef 35%); }
.toolbar > button { flex: none; width: 26px; height: 24px; }
.toolbar > .drop { width: 16px; }
.toolbar > .snap { width: 74px; margin-left: 4px; }
.grip { flex: none; width: 3px; height: 20px; margin-right: 2px; background: repeating-linear-gradient(#bbb 0 1px, transparent 1px 3px) left / 2px 100% no-repeat; }
.sep { flex: none; width: 1px; height: 20px; margin: 0 4px; background: #c6c6c6; }
.arr { display: inline-block; border: 3px solid transparent; border-top: 4px solid #000; border-bottom: 0; }
.arr.big { border-width: 5px 4px 0; }
.dim .arr { border-top-color: #999; }

.pick { position: relative; display: flex; flex: none; }
.pick select { width: 100%; height: 21px; padding: 0 6px; }
.pick::after { content: ""; position: absolute; right: 4px; top: 9px; border: 4px solid transparent; border-top: 4px solid #000; border-bottom: 0; pointer-events: none; }
.zoom { width: 86px; }
.outline { width: 74px; }
.pick.off::after { border-top-color: #999; }
.pick.off select { border: 1px solid #bdbdbd; border-radius: 2px; background: #f0f0f0; color: #838383; padding: 0 4px; }

.props { height: 39px; background: linear-gradient(#fff, #efefef 45%); }
.props .sep { height: 26px; margin: 0 6px; }
.pair { display: grid; grid-template-columns: 17px 76px; grid-auto-rows: 16px; row-gap: 1px; align-items: center; justify-items: center; margin: 0 0 0 3px; }
.pair input { width: 100%; height: 16px; padding: 0 2px; }
.pair.scale { grid-template-columns: 43px 16px; margin-left: 2px; }
.pair label { color: #333; }
.toolbar > .lock { width: 22px; padding-bottom: 8px; margin: 0 4px 0 3px; }
.ico { margin: 0 2px; }
.w46 { width: 46px; height: 21px; padding: 0 3px; flex: none; }
.deg { padding: 0 7px 4px; }
.spin { display: flex; flex: none; background: #fff; height: 23px; border: 1px solid #cfcfcf; }
.spin.w46 { padding: 0; }
.spin input { flex: 1; width: 10px; padding: 0 0 2px 4px; background: none; }
.ud { display: flex; flex-direction: column; width: 18px; padding: 1px; gap: 1px; }
.ud button { flex: 1; border: 1px solid #b4b8c2; background: linear-gradient(#fff, #e4e6ee); }
.ud button::before { content: ""; border: 2px solid transparent; border-top: 0; border-bottom: 3px solid #59607a; }
.ud button + button::before { border-bottom: 0; border-top: 3px solid #59607a; }
.spin.off, .spin.off .ud button { background: #f0f0f0; border-color: #bdbdbd; color: #838383; }
.spin.off .ud button::before { border-top-color: #999; border-bottom-color: #999; }
.spin.off input { color: #838383; }

.middle { flex: 1; min-height: 0; display: flex; position: relative; }
.toolbox { width: 30px; flex: none; padding: 4px 0 0 3px; border-right: 1px solid #c4c4c4; background: linear-gradient(90deg, #fafafa, #ededf0); }
.grip.flat { display: block; width: 19px; height: 3px; margin: 0 0 5px 2px; background: repeating-linear-gradient(90deg, #bbb 0 1px, transparent 1px 3px) top / 100% 1px no-repeat; }
.toolbox button { position: relative; width: 24px; height: 26px; }
.toolbox button.on { height: 24px; margin: -1px 0 2px; border: 1px solid #70747c; border-radius: 2px; background: #d9dadd; }
.more { position: absolute; right: 2px; bottom: 3px; width: 5px; height: 5px; }

.workspace { flex: 1; min-width: 0; display: grid; grid-template: 21px 1fr 21px / 21px 1fr 18px; }
.corner { display: grid; place-items: center; }
.ruler-h { grid-column: 2 / 4; width: 100%; border-bottom: 1px solid #8b8b8b; }
.ruler-v { grid-row: 2 / 4; grid-column: 1; height: 100%; border-right: 1px solid #8b8b8b; }
.ruler-h text, .ruler-v text { font-size: 9px; text-anchor: middle; }
.canvas { background: #fff; position: relative; overflow: hidden; }
.sheet { position: absolute; left: 393px; top: 66px; width: 375px; height: 529px; border: 1px solid #8c8c8c; background: #fff; box-shadow: 6px 4px 0 #b4b4b4; }
.vscroll { display: flex; flex-direction: column; justify-content: space-between; align-items: center; padding: 7px 0 5px; background: #f1f1f1; border-right: 1px solid #c4c4c4; }
.tri { border: 3px solid transparent; flex: none; }
.t-up { border-top: 0; border-bottom: 4px solid #222; }
.t-down { border-bottom: 0; border-top: 4px solid #222; }
.t-left { border-left: 0; border-right: 4px solid #222; }
.t-right { border-right: 0; border-left: 4px solid #222; }
.light { border-bottom-color: #fff; }
.pagebar { grid-column: 2 / 4; display: flex; align-items: center; border-top: 1px solid #8b8b8b; border-right: 1px solid #c4c4c4; font-size: 12px; }
.pagebar > button { width: 17px; height: 18px; flex: none; }
.count { width: 68px; text-align: center; }
.pagebar > .page-tab { width: 99px; margin-left: 3px; background: linear-gradient(#c9e9fa, #8acbee); clip-path: polygon(0 0, 90% 0, 100% 100%, 0 100%); }
.hscroll { flex: 1; display: flex; align-items: center; gap: 8px; margin: 0 2px 0 316px; padding-left: 7px; border-left: 1px solid #aaa; height: 100%; }
.thumb { display: grid; place-items: center; border: 1px solid #9a9a9a; border-radius: 2px; background: linear-gradient(#f5f5f5, #cfcfcf); }
.hscroll .thumb { flex: 1; height: 15px; }

.docker { width: 210px; flex: none; display: flex; flex-direction: column; }
.docker > header { height: 19px; flex: none; display: flex; align-items: center; gap: 3px; padding: 0 3px 0 8px; background: linear-gradient(#d5effc, #c0e6fb 50%, #9fd8f8 55%, #b7e3fb); }
.docker h2 { flex: 1; font-size: 12px; }
.chev { font-size: 16px; margin-right: 5px; padding-bottom: 2px; color: #444; }
.docker > header button { width: 17px; height: 17px; border: 1px solid #66748c; border-radius: 2px; background: #cfe0f2; }
.docker > header .red { background: #c9534c; border-color: #7c2c2c; }
.docker-row { flex: 1; display: flex; }
.docker-body { flex: 1; display: flex; flex-direction: column; align-items: flex-start; padding: 9px 0 0 19px; }
.docker-body hr { width: 141px; margin: 8px 0 13px; }
.modes { display: flex; gap: 4px; }
.modes button { width: 22px; height: 22px; border: 1px solid #74787f; border-radius: 3px; background: linear-gradient(#fdfdfd, #dcdcdc); }
.modes button.on { background: linear-gradient(#d3e9f5, #8fc3e0); border-color: #3d6b86; }
.radio { display: flex; align-items: center; gap: 4px; height: 16px; white-space: nowrap; }
.docker-body .radio { margin-bottom: 8px; }
.off { color: #838383; }
input[type=radio] { appearance: none; width: 12px; height: 12px; border: 1px solid #84898f; border-radius: 50%; background: #fff; }
input[type=radio]:checked { background: radial-gradient(#1c3e68 0 3px, #e4ecf4 4px); }
input[type=radio]:disabled { border-color: #bdbdbd; background: #f3f3f3; }
input[type=radio]:checked:disabled { background: radial-gradient(#8c8c8c 0 3px, #f3f3f3 4px); border-color: #999; }
.steps { width: 63px; }
.loop { display: flex; gap: 10px; margin: 40px 0 92px 63px; line-height: 14px; }
.loop label { display: flex; gap: 2px; align-items: center; }
input[type=checkbox] { appearance: none; width: 13px; height: 13px; border: 1px solid #bdbdbd; }
.docker-body .loop + hr { margin: 0 0 9px; }
.pathbtns { display: flex; gap: 4px; margin-bottom: 9px; }
.pathbtns button, .apply { width: 45px; height: 22px; border: 1px solid #bdbdbd; border-radius: 2px; color: #838383; }
.docker-body .apply { width: 143px; }
.vtabs { width: 26px; display: flex; flex-direction: column; padding-top: 4px; border-left: 1px solid #c4c4c4; }
.vtabs button { flex-direction: column; justify-content: flex-start; gap: 2px; width: 22px; height: 136px; padding-top: 5px; border: 1px solid #bdbdbd; border-left: 0; border-radius: 0 5px 5px 0; color: #555; }
.vtabs .on { height: 116px; background: #fafafa; color: #000; }
.vtabs span { writing-mode: vertical-rl; }
.vtabs .x { margin: auto 0 7px; }

.win { position: absolute; border: 1px solid #3a4452; background: #d7e3f1; box-shadow: inset 0 0 0 1px #e9f1fa; }
.win header { display: flex; align-items: center; }
.palette { left: 813px; top: 122px; width: 204px; height: 205px; padding: 0 8px; background: linear-gradient(#c2d0df, #d7e3f1 20%); }
.palette header { height: 25px; padding-top: 6px; justify-content: flex-end; gap: 3px; }
.palette h2 { font: 12px/16px "Open Sans", "Noto Sans", sans-serif; color: #4c5666; }
.palette header button { width: 14px; height: 14px; border: 1px solid #8394ac; border-radius: 2px; }
.palette-row { display: flex; justify-content: flex-end; }
.swatches { display: grid; grid-template-columns: repeat(3, 17px); grid-auto-rows: 17px; }
.swatches i { border: solid #555; border-width: 1px 1px 0 0; }
.pscroll { width: 16px; background: #f0f0f0; display: flex; flex-direction: column; align-items: center; padding-top: 7px; gap: 7px; }
.pscroll .thumb { width: 14px; height: 123px; background: linear-gradient(90deg, #f5f5f5, #cfcfcf); }
.size { width: 9px; height: 9px; margin-top: auto; background: radial-gradient(#aaa 1px, transparent 1px) 0 0 / 3px 3px; clip-path: polygon(100% 0, 100% 100%, 0 100%); }

.dialog { left: 488px; top: 124px; width: 464px; padding: 0 8px 9px; border-color: #10141c; border-radius: 6px 6px 0 0; background: linear-gradient(#93abc8, #b9cfe8 24px, #f0f0f0 24px); box-shadow: inset 0 0 0 1px #3fb9dc, inset 0 2px 0 #c6d8ea; }
.dialog header { height: 24px; justify-content: space-between; padding-top: 2px; }
.dialog h2 { font: 12px/16px "Open Sans", "Noto Sans", sans-serif; }
.dialog .close { width: 30px; height: 17px; border: 1px solid #5a1b16; border-radius: 3px; background: linear-gradient(#dba095, #c6452d 50%, #ad2c16 50%, #d0664d); }
.tabs { display: flex; align-items: flex-end; height: 28px; }
.tabs button { height: 20px; gap: 5px; padding: 0 4px; border: 1px solid #8b8b8b; border-left-width: 0; border-bottom: 0; background: linear-gradient(#f5f5f5, #dedede); }
.tabs button.on { height: 22px; width: 77px; border-left-width: 1px; background: #fff; margin-bottom: -1px; padding-bottom: 2px; gap: 7px; position: relative; }
.panel { display: flex; gap: 8px; width: 429px; height: 288px; padding: 13px 7px 8px 8px; border: 1px solid #8b8b8b; background: #fff; }
.mixer { width: 240px; display: flex; flex-direction: column; gap: 11px; }
.model { display: flex; align-items: center; justify-content: space-between; height: 23px; }
.grey { width: 189px; }
.grey select { height: 22px; border: 2px solid #b9cbe0; border-radius: 3px; background: linear-gradient(#eceff3, #d5dae1); color: #777; padding: 0 4px; }
.grey::after { border-top-color: #555; }
.fields { display: flex; justify-content: space-between; padding: 0 2px; height: 231px; }
.field { position: relative; width: 212px; background: linear-gradient(transparent, rgba(23, 25, 27, .08) 20%, rgba(26, 28, 30, .28) 40%, rgba(30, 32, 34, .55) 60%, rgba(30, 32, 34, .8) 78%, #1e2021 91%, #17191b), radial-gradient(ellipse 90% 100% at 0 100%, rgba(40, 55, 58, .8), rgba(50, 55, 58, .45) 55%, rgba(60, 60, 60, 0)), linear-gradient(90deg, #fafafa, #f6cdc6 18%, #f3a093 36%, #ee7055 55%, #ea5020 72%, #e84000 84%, #e83c00); }
.cursor { position: absolute; left: 180px; top: 31px; width: 9px; height: 9px; border: 1px solid #8f8f8f; }
.hue { position: relative; width: 15px; background: linear-gradient(#e93d00, #ec4062 13%, #8f2a80 20%, #3a1a6e 25%, #2a1f78 36%, #00428c 41%, #009fe3 45%, #00a878 54%, #00a550 60%, #00a03c 75%, #8cc63f 79%, #f5ee00 84%, #f59a00 91%, #e94a00 96%, #c0501c); }
.marker { position: absolute; left: -3px; bottom: 0; width: 21px; height: 5px; border: 1px solid #222; background: linear-gradient(90deg, #fff 2px, #a86038 2px 17px, #fff 17px); }
.details { flex: 1; }
fieldset { border: 1px solid #d6d6d6; border-radius: 3px; display: flex; }
legend { padding: 0 3px; line-height: 14px; }
.sample { margin-top: -5px; height: 77px; padding: 2px 6px 6px 4px; justify-content: space-between; }
.sample p { line-height: 26px; padding-left: 5px; }
.chip { width: 69px; height: 54px; background: #e93d00; }
.comps { margin-top: 4px; height: 144px; padding: 9px 28px 0 4px; justify-content: space-between; }
.cmyk { display: grid; grid-template-columns: 16px 50px; row-gap: 6px; align-items: center; height: min-content; padding-left: 8px; }
.num { display: flex; height: 23px; border: 1px solid #ddd; border-top-color: #aaa; padding: 2px; }
.num input { width: 34px; padding-left: 3px; padding-bottom: 3px; }
.num button { flex: 1; background: #efefef; }
dl { display: grid; grid-template-columns: 12px 22px; grid-auto-rows: 20px; text-align: right; height: 60px; }
dt { text-align: left; }
.name { display: block; margin: 6px 0 3px; line-height: 14px; }
.named select { border: 1px solid #ddd; padding: 0 4px; }
.actions { display: flex; justify-content: space-between; margin: 8px 16px 0 1px; }
.split { display: flex; gap: 2px; }
.actions button, .ex-actions button { width: 73px; height: 22px; border: 1px solid #707070; border-radius: 3px; background: linear-gradient(#f4f4f4, #ebebeb 50%, #dadada 50%, #d0d0d0); }
.actions .add { width: 91px; }
.actions .dd { width: 13px; }
.actions .tight { gap: 4px; }
.actions .default { border: 2px solid #45b4dc; background: linear-gradient(#f0f7fb, #e2f1f9 50%, #cce8f6 50%, #c4e4f4); }

.extrude { left: 1095px; top: 147px; width: 218px; padding: 0 7px 7px; border-radius: 6px 6px 0 0; background: linear-gradient(#b9c8d8, #d7e3f1 30px); }
.extrude header { height: 30px; padding: 5px 3px 0; gap: 6px; }
.extrude h2 { flex: 1; font: 12px/16px "Open Sans", "Noto Sans", sans-serif; color: #4c5666; }
.ex-body { display: flex; flex-direction: column; align-items: flex-start; height: 383px; padding: 6px 0 0 15px; background: #f0f0f0; }
.ex-body hr { width: 141px; margin: 7px 0 5px; }
.cap { margin-bottom: 3px; }
.preview { width: 144px; height: 54px; display: grid; place-items: center; border: 1px solid #8b8b8b; background: #fff; margin-bottom: 4px; }
.ex-body .pick { width: 144px; margin-bottom: 3px; }
.dims { display: grid; grid-template-columns: 54px 74px 20px; gap: 5px 2px; padding: 1px 0 7px; align-items: center; }
.dims label { padding-left: 2px; }
.mm { padding-left: 8px; }
.spin.short { width: 59px; }
.ex-body .radio { padding-left: 2px; }
.ex-body .radio + hr { margin: 9px 0 8px; }
.ex-actions { display: flex; gap: 3px; }
.ex-actions button { width: 69px; }
.ex-actions button:disabled { background: none; border-color: #bdbdbd; color: #838383; }

.status { flex: none; height: 43px; display: flex; justify-content: space-between; padding: 1px 4px 0; background: linear-gradient(#fff, #efefef 50%); }
.status p { display: flex; align-items: center; height: 20px; gap: 3px; white-space: nowrap; }
.info { overflow: hidden; }
.obj { margin-left: 16px; }
.hint { margin-left: 4px; }
.colors { width: 202px; }
.sw { width: 18px; height: 17px; border: 1px solid #888; }
.fill { background: #e93d00; }
.line { background: #2f0a6c; }

.taskbar { flex: none; height: 40px; display: flex; align-items: center; border-top: 1px solid #3f4c60; background: linear-gradient(#9cabc0, #7a8ca8 12%, #7f91ad); color: #f2f5fa; font: 12px/17px "Open Sans", "Noto Sans", sans-serif; }
.start { width: 54px; padding-bottom: 1px; }
.group { display: flex; flex: 0 1 auto; min-width: 0; height: 38px; margin-left: 2px; border: 1px solid #4c5b72; border-radius: 3px; box-shadow: inset 0 0 0 1px #b4c0d0; }
.start + .group { margin-left: 5px; }
.task { width: 158px; min-width: 0; justify-content: flex-start; gap: 7px; padding-left: 7px; overflow: hidden; background: linear-gradient(160deg, #b6c1cf, #8b9bb3 45%, #7c8eaa); }
.task.active { background: linear-gradient(160deg, #dbe2e8, #b4c0cc 50%, #a5b6cc); }
.pins { display: flex; }
.pins button { width: 63px; }
.tray { margin-left: auto; display: flex; align-items: center; gap: 6px; }
.lang { margin: 0 10px 4px 0; }
.tray .light { margin-right: 5px; border-width: 0 4px 5px; }
.clock { display: flex; flex-direction: column; align-items: center; width: 72px; margin-left: 2px; }
.show { width: 14px; height: 39px; margin-left: 2px; border-left: 1px solid #aab6c6; background: linear-gradient(90deg, #5b6b82, #8494ac); }
```
